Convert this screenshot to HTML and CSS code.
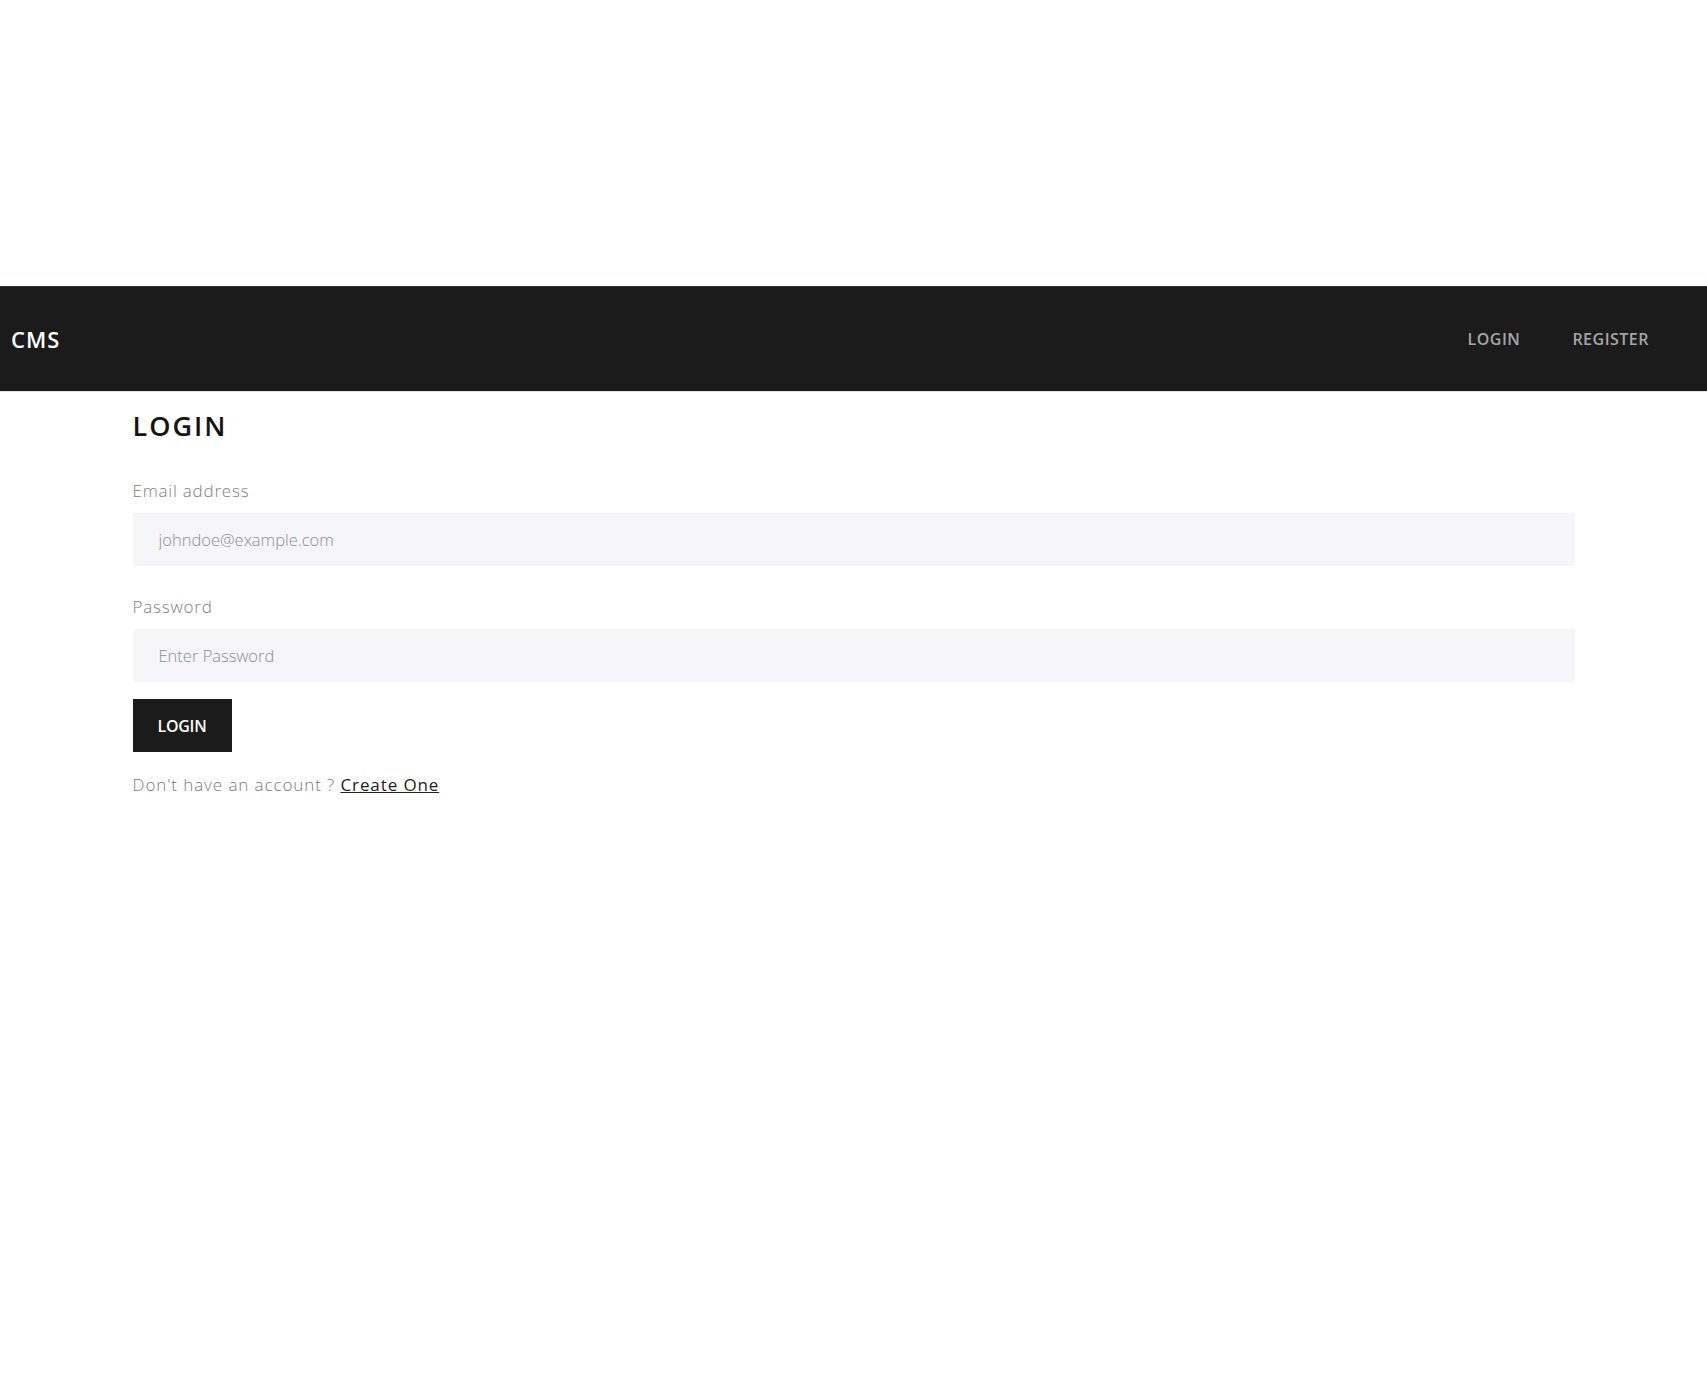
FILE: index.html
```html
<!DOCTYPE html>
<html lang="en">
<head>
<meta charset="utf-8">
<title>CMS - Login</title>
<link rel="stylesheet" href="styles.css">
</head>
<body>
<div class="spacer"></div>
<nav class="navbar">
  <a class="brand" href="#">CMS</a>
  <ul class="nav-links">
    <li><a href="#">LOGIN</a></li>
    <li><a href="#">REGISTER</a></li>
  </ul>
</nav>
<main class="container">
  <h1 class="title">LOGIN</h1>
  <form class="form">
    <div class="field">
      <label class="label" for="email">Email address</label>
      <input class="input" id="email" type="email" placeholder="johndoe@example.com">
    </div>
    <div class="field">
      <label class="label" for="password">Password</label>
      <input class="input" id="password" type="password" placeholder="Enter Password">
    </div>
    <button class="btn" type="button">LOGIN</button>
  </form>
  <p class="hint">Don't have an account ? <a href="#">Create One</a></p>
</main>
</body>
</html>
```

FILE: styles.css
```css
* { box-sizing: border-box; }

body {
  margin: 0;
  font-family: "Open Sans", "Noto Sans", sans-serif;
  background: #fff;
  color: #1a1a1a;
}

.spacer { height: 286px; }

.navbar {
  height: 106px;
  background: #1b1b1b;
  border-top: 1px solid #2b3242;
  border-bottom: 1px solid #e2e2e2;
  display: flex;
  align-items: center;
  justify-content: space-between;
  padding: 0 58px 0 11px;
}

.brand {
  color: #fff;
  text-decoration: none;
  font-weight: 600;
  font-size: 22px;
  letter-spacing: 1px;
}

.nav-links {
  list-style: none;
  margin: 0;
  padding: 0;
  display: flex;
  gap: 52px;
}

.nav-links a {
  color: #a6a6a6;
  text-decoration: none;
  font-weight: 600;
  font-size: 16px;
  letter-spacing: 0.5px;
}

.container {
  width: 1442px;
  margin: 0 auto;
}

.title {
  margin: 15px 0 35px;
  font-size: 27px;
  font-weight: 600;
  letter-spacing: 2px;
  line-height: 37px;
  color: #141414;
}

.form {
  display: flex;
  flex-direction: column;
  align-items: flex-start;
}

.field {
  width: 100%;
  margin-bottom: 29px;
}

.field + .field { margin-bottom: 17px; }

.label {
  display: block;
  font-size: 17px;
  font-weight: 300;
  letter-spacing: 0.8px;
  color: #7e7e7e;
  line-height: 24px;
  margin-bottom: 10px;
}

.input {
  display: block;
  width: 100%;
  height: 53px;
  border: none;
  background: #f6f6f8;
  padding: 0 26px;
  font-family: inherit;
  font-size: 16.5px;
  font-weight: 300;
  color: #333;
  outline: none;
}

.input::placeholder {
  color: #8d8d8d;
  font-weight: 300;
}

.btn {
  width: 99px;
  height: 53px;
  border: none;
  background: #1b1b1b;
  color: #fff;
  font-family: inherit;
  font-weight: 600;
  font-size: 16px;
  letter-spacing: -0.3px;
  cursor: pointer;
}

.hint {
  margin: 21px 0 0;
  font-size: 17px;
  font-weight: 300;
  letter-spacing: 0.9px;
  color: #7a7a7a;
}

.hint a {
  color: #222;
  text-decoration: underline;
  font-weight: 400;
}
```
